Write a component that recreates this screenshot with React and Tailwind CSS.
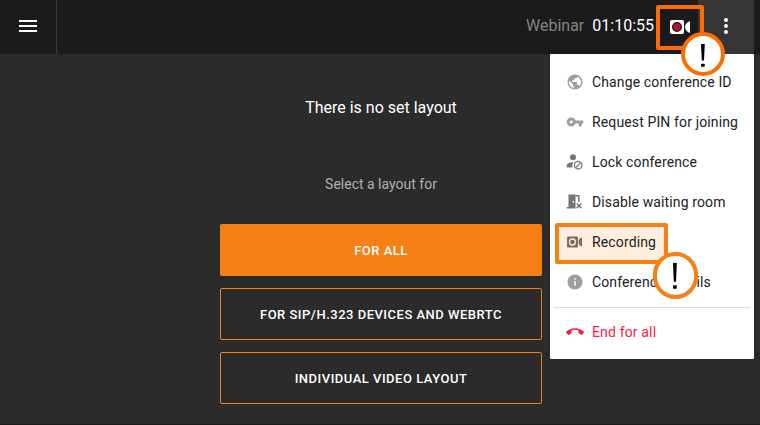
const Globe = () => (
  <svg viewBox="0 0 24 24" className="size-[18px] fill-[#9e9e9e]">
    <path d="M12 2C6.48 2 2 6.48 2 12s4.480 10 10 10 10-4.480 10-10S17.520 2 12 2zm-1 17.930c-3.950-.490-7-3.850-7-7.930 0-.620.080-1.210.210-1.790L9 15v1c0 1.100.900 2 2 2v1.930zm6.900-2.540c-.260-.810-1-1.390-1.900-1.390h-1v-3c0-.550-.450-1-1-1H8v-2h2c.550 0 1-.450 1-1V7h2c1.100 0 2-.900 2-2v-.410c2.930 1.190 5 4.060 5 7.410 0 2.080-.800 3.970-2.100 5.390z" />
  </svg>
);

const Key = () => (
  <svg viewBox="0 0 24 24" className="size-[18px] fill-[#9e9e9e]">
    <path d="M12.650 10C11.830 7.670 9.610 6 7 6c-3.310 0-6 2.690-6 6s2.690 6 6 6c2.610 0 4.830-1.670 5.650-4H17v4h4v-4h2v-4H12.650zM7 14c-1.100 0-2-.900-2-2s.900-2 2-2 2 .900 2 2-.900 2-2 2z" />
  </svg>
);

const UserBlocked = () => (
  <svg viewBox="0 0 18 18" className="size-[18px]">
    <circle cx="7" cy="4.300" r="3" fill="#757575" />
    <path d="M7.400 9.300C3.600 9 .8 10.600 .8 12.600v1.900h5.700a6 6 0 0 1 .9-5.200z" fill="#757575" />
    <circle cx="12.200" cy="12.200" r="3.800" fill="none" stroke="#757575" strokeWidth="1.300" />
    <path d="M9.600 14.800l5.200-5.200" stroke="#757575" strokeWidth="1.300" />
  </svg>
);

const Door = () => (
  <svg viewBox="0 0 18 18" className="size-[18px]">
    <path fillRule="evenodd" d="M2.500 1.500H9.500v14H.8V14h1.700zM6.500 8v1.600h1.500V8z" fill="#757575" />
    <path d="M9.500 2.700h3.300V9" fill="none" stroke="#757575" strokeWidth="1.500" />
    <path d="M10.700 10.500l4.600 4.600m0-4.600l-4.600 4.600" stroke="#757575" strokeWidth="1.500" />
  </svg>
);

const Camera = () => (
  <svg viewBox="0 0 18 18" className="size-[18px]">
    <rect x="1" y="3.500" width="11" height="11" rx="1.300" fill="#786e64" />
    <circle cx="6.500" cy="9" r="3" fill="none" stroke="#ffeedd" strokeWidth="1.300" />
    <path d="M16 4.300v9.400Q12.500 12.500 12.500 9T16 4.300z" fill="#786e64" />
  </svg>
);

const Info = () => (
  <svg viewBox="0 0 24 24" className="size-[18px] fill-[#9e9e9e]">
    <path d="M12 2C6.480 2 2 6.480 2 12s4.480 10 10 10 10-4.480 10-10S17.520 2 12 2zm1 15h-2v-6h2v6zm0-8h-2V7h2v2z" />
  </svg>
);

const HangUp = () => (
  <svg viewBox="0 0 24 24" className="size-[18px] fill-[#ff1744]">
    <path d="M12 9c-1.600 0-3.150.250-4.600.720v3.100c0 .390-.230.740-.560.900-.980.490-1.870 1.120-2.660 1.850-.180.180-.430.280-.700.280-.280 0-.530-.110-.710-.290L.290 13.080C.110 12.900 0 12.650 0 12.370s.110-.530.290-.710C3.340 8.780 7.460 7 12 7s8.660 1.780 11.710 4.660c.180.180.290.430.290.710s-.110.530-.290.710l-2.480 2.480c-.180.180-.430.290-.710.290-.270 0-.520-.110-.700-.280-.790-.740-1.690-1.360-2.670-1.850-.330-.160-.560-.500-.560-.900v-3.100C15.150 9.250 13.600 9 12 9z" />
  </svg>
);

const items = [
  [Globe, "Change conference ID"],
  [Key, "Request PIN for joining"],
  [UserBlocked, "Lock conference"],
  [Door, "Disable waiting room"],
  [Camera, "Recording"],
  [Info, "Conference details"],
];

const Exclamation = ({ className }) => (
  <svg viewBox="0 0 8 24" preserveAspectRatio="none" className={className}>
    <path d="M2 0h3.800L5 17.300H2.800z" />
    <rect x="2.100" y="20.600" width="3.600" height="3.200" rx=".6" />
  </svg>
);

export default function App() {
  return (
    <div className="relative flex h-[425px] w-[760px] flex-col overflow-hidden border-b border-[#1b1b1b] bg-[#2b2b2b] font-[Roboto,sans-serif] text-white">
      <header className="flex h-[54px] shrink-0 bg-[#1b1b1b]">
        <button className="flex w-[57px] items-center border-r border-[#383838] pb-[2px] pl-[19px]">
          <span className="flex h-3 w-[18px] flex-col justify-between">
            <i className="h-0.5 bg-white" />
            <i className="h-0.5 bg-white" />
            <i className="h-0.5 bg-white" />
          </span>
        </button>
        <div className="flex flex-1 items-center justify-end gap-2 pr-[2px] pb-[3px] text-base leading-5">
          <span className="text-[#848484]">Webinar</span>
          <span>01:10:55</span>
        </div>
        <div className="flex w-[42px] items-center pl-[14px]">
          <svg viewBox="0 0 20 16" className="h-4 w-5">
            <rect y="1" width="14" height="14" rx="1.800" fill="#fff" />
            <circle cx="7" cy="8" r="4.400" fill="#b5122e" stroke="#241016" strokeWidth="1.200" />
            <path d="M20 2v12Q15 12 15 8T20 2z" fill="#fff" />
          </svg>
        </div>
        <button className="flex w-14 flex-col items-center justify-center gap-[2px] bg-[#353535] pb-[2px]">
          <i className="size-1 rounded-full bg-white" />
          <i className="size-1 rounded-full bg-white" />
          <i className="size-1 rounded-full bg-white" />
        </button>
        <div className="w-1.5" />
      </header>

      <main className="flex w-[762px] flex-col items-center">
        <h1 className="mt-[42px] text-base leading-6">There is no set layout</h1>
        <p className="mt-[54px] text-sm leading-5 text-[#b0b0b0]">Select a layout for</p>
        <div className="mt-[30px] flex w-[322px] flex-col gap-3 text-[13px] font-medium tracking-[0.5px]">
          <button className="h-[52px] rounded-xs bg-[#f58016] pt-[2px]">FOR ALL</button>
          <button className="h-[52px] rounded-xs border border-[#f58016] pt-[2px]">FOR SIP/H.323 DEVICES AND WEBRTC</button>
          <button className="h-[52px] rounded-xs border border-[#f58016] pt-[2px]">INDIVIDUAL VIDEO LAYOUT</button>
        </div>
      </main>

      <nav className="absolute top-[54px] left-[550px] h-[305px] w-[204px] rounded-[1px] bg-white pt-2 text-sm text-[#212121]">
        {items.map(([Icon, label]) => (
          <div key={label} className="relative flex h-10 items-center gap-2 pl-4 whitespace-nowrap">
            {label === "Recording" && (
              <div className="absolute top-[1px] left-[5px] h-[41px] w-[113px] rounded-xs border-4 border-[#f58016] bg-[#ffeedd]" />
            )}
            <span className="relative"><Icon /></span>
            <span className="relative tracking-[0.13px]">{label}</span>
          </div>
        ))}
        <div className="mx-1 mt-[5px] h-px bg-[#dedede]" />
        <div className="mt-1 flex h-10 items-center gap-2 pl-4 text-[#ff1744]">
          <HangUp />
          <span className="tracking-[0.15px]">End for all</span>
        </div>
      </nav>

      <div className="pointer-events-none absolute top-[5px] left-[656px] h-[45px] w-12 rounded-xs border-4 border-[#ff6d00]" />
      <div className="absolute top-8 left-[681px] flex size-11 items-center justify-center rounded-full border-4 border-[#ff6d00] bg-white pt-[2px] pr-[1px]">
        <Exclamation className="h-[23px] w-2" />
      </div>
      <div className="absolute top-[252px] left-[653px] flex h-[47px] w-[45px] items-center justify-center rounded-full border-4 border-[#f58016] bg-white pr-[1px]">
        <Exclamation className="h-[26px] w-2" />
      </div>
    </div>
  );
}
